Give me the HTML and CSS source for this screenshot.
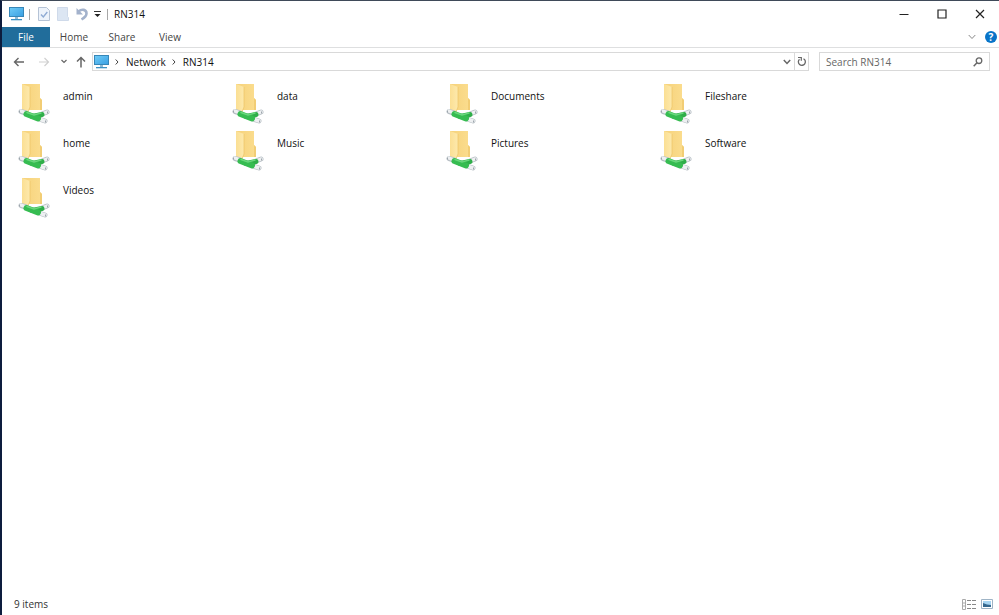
FILE: index.html
```
<!DOCTYPE html>
<html lang="en">
<head>
<meta charset="utf-8">
<title>RN314</title>
<link rel="stylesheet" href="styles.css">
</head>
<body>
<svg class="defs" width="0" height="0" aria-hidden="true">
  <defs>
    <linearGradient id="screen" x1="0" y1="0" x2="1" y2="1"><stop offset="0" stop-color="#6fccf7"/><stop offset="1" stop-color="#3a9fe2"/></linearGradient>
    <linearGradient id="flap" x1="0" y1="0" x2="1" y2="0"><stop offset="0" stop-color="#fbdf93"/><stop offset="1" stop-color="#fde9ad"/></linearGradient>
    <linearGradient id="back" x1="0" y1="0" x2="1" y2="0"><stop offset="0" stop-color="#f6d27a"/><stop offset="1" stop-color="#fbdd8f"/></linearGradient>
    <symbol id="pc" viewBox="0 0 15 14">
      <rect x="0.5" y="0.5" width="14" height="9" fill="url(#screen)" stroke="#3787b8"/>
      <path d="M6 10h3v2h-3z" fill="#8fb9d2"/><path d="M2 12h11v1.300H2z" fill="#3c91c3"/>
    </symbol>
    <symbol id="folder" viewBox="0 0 32 42">
      <path d="M4 1H22V15L24 17V27H4z" fill="url(#back)"/>
      <path d="M22 15L24 17V27H22z" fill="#f2cd75"/>
      <path d="M4 1L12 4V24L10 29L4 27z" fill="url(#flap)"/>
      <path d="M12 4V24L10 29" fill="none" stroke="#edc66b" stroke-width="0.800"/>
      <path d="M3 28.500L8 30M24 31L29 29M21 36L27 38" fill="none" stroke="#b9c0c6" stroke-width="5" stroke-linecap="round"/>
      <path d="M3 28L8 30M24 31L29 29M21 36L27 38" fill="none" stroke="#eef0f2" stroke-width="3.500" stroke-linecap="round"/>
      <path d="M14 33.500L24 31.500" stroke="#2fae49" stroke-width="5" stroke-linecap="round"/>
      <path d="M8.500 31L20 35.500" stroke="#36bc51" stroke-width="6" stroke-linecap="round"/>
      <path d="M9 29.500L16 32L23 30" fill="none" stroke="#69d77c" stroke-width="1.500" stroke-linecap="round"/>
      <path d="M1.500 27.500v2M29.500 28.500v2M27.500 37.500v2" stroke="#9da6ad"/>
    </symbol>
  </defs>
</svg>
<div class="window">
  <header class="titlebar">
    <svg class="pc" width="15" height="14"><use href="#pc"/></svg>
    <span class="rule"></span>
    <button class="quick" aria-label="Properties"><svg width="12" height="14" viewBox="0 0 12 14"><path d="M.5 .5h8l3 3v10H.5z" fill="#edf3fb" stroke="#b5c3d6"/><path d="M3 7.500l2.300 2.500L9.300 5" fill="none" stroke="#8fabd4" stroke-width="1.400"/></svg></button>
    <button class="quick" aria-label="New folder"><svg width="12" height="14" viewBox="0 0 12 14"><path d="M.5 .5h10v9l1 1v3H.5z" fill="#dce6f3" stroke="#cfdaea"/></svg></button>
    <button class="quick undo" aria-label="Undo"><svg width="12" height="14" viewBox="0 0 12 14"><path d="M2.500 4.500C6 1.500 10.500 2.500 10.500 6.500C10.500 9.500 8 11 5.500 12.500" fill="none" stroke="#a3b2cc" stroke-width="2.600"/><path d="M.5 1v6.500H7z" fill="#a3b2cc"/></svg></button>
    <button class="quick more" aria-label="Customize toolbar"><svg width="7" height="7" viewBox="0 0 7 7"><path d="M0 .5h7" stroke="#333"/><path d="M.5 3h6L3.500 6z" fill="#222"/></svg></button>
    <span class="rule"></span>
    <h1>RN314</h1>
    <div class="controls">
      <button aria-label="Minimize"><svg width="10" height="10" viewBox="0 0 10 10"><path d="M.5 5.500h9" stroke="#222"/></svg></button>
      <button aria-label="Maximize"><svg width="10" height="10" viewBox="0 0 10 10"><path d="M1 1h8v8H1z" fill="none" stroke="#222" stroke-width="1.200"/></svg></button>
      <button aria-label="Close"><svg width="10" height="10" viewBox="0 0 10 10"><path d="M1 1l8 8M9 1L1 9" stroke="#222" stroke-width="1.200"/></svg></button>
    </div>
  </header>
  <nav class="ribbon">
    <button class="tab file">File</button>
    <button class="tab">Home</button>
    <button class="tab">Share</button>
    <button class="tab">View</button>
    <button class="expand" aria-label="Expand ribbon"><svg width="8" height="6" viewBox="0 0 8 6"><path d="M.7 1L4 4.500L7.300 1" fill="none" stroke="#888"/></svg></button>
    <button class="help" aria-label="Help">?</button>
  </nav>
  <div class="location">
    <button class="nav" aria-label="Back"><svg width="12" height="12" viewBox="0 0 12 12"><path d="M11 6H1.500M5.500 2L1.500 6L5.500 10" fill="none" stroke="#666" stroke-width="1.400"/></svg></button>
    <button class="nav forward" aria-label="Forward" disabled><svg width="12" height="12" viewBox="0 0 12 12"><path d="M1 6h9.500M6.500 2L10.500 6L6.500 10" fill="none" stroke="#d0d0d0" stroke-width="1.200"/></svg></button>
    <button class="nav recent" aria-label="Recent locations"><svg width="6" height="5" viewBox="0 0 6 5"><path d="M.5 1L3 3.500L5.500 1" fill="none" stroke="#666" stroke-width="1.200"/></svg></button>
    <button class="nav up" aria-label="Up"><svg width="12" height="12" viewBox="0 0 12 12"><path d="M6 11.500V1.500M2 5.500L6 1.500L10 5.500" fill="none" stroke="#666" stroke-width="1.500"/></svg></button>
    <div class="address">
      <svg class="pc" width="15" height="14"><use href="#pc"/></svg>
      <svg class="crumb" width="4" height="6" viewBox="0 0 4 6"><path d="M.7 .5L3 3L.7 5.500" fill="none" stroke="#444"/></svg>
      <a href="#network">Network</a>
      <svg class="crumb" width="4" height="6" viewBox="0 0 4 6"><path d="M.7 .5L3 3L.7 5.500" fill="none" stroke="#444"/></svg>
      <a href="#rn314">RN314</a>
      <button class="history" aria-label="Previous locations"><svg width="8" height="6" viewBox="0 0 8 6"><path d="M.8 1L4 4.500L7.200 1" fill="none" stroke="#666" stroke-width="1.500"/></svg></button>
      <button class="refresh" aria-label="Refresh"><svg width="10" height="11" viewBox="0 0 10 11"><path d="M6.500 2.700A3.500 3.500 0 1 1 2.500 3.200" fill="none" stroke="#666" stroke-width="1.300"/><path d="M1 1.500h3.300v3.300" fill="none" stroke="#666" stroke-width="1.200"/></svg></button>
    </div>
    <label class="search">
      <input type="search" placeholder="Search RN314" aria-label="Search RN314">
      <svg width="10" height="10" viewBox="0 0 10 10"><circle cx="6" cy="3.700" r="2.800" fill="none" stroke="#666" stroke-width="1.300"/><path d="M4 5.800L.7 9.200" stroke="#666" stroke-width="1.500"/></svg>
    </label>
  </div>
  <main>
    <ul class="files">
      <li><svg width="32" height="42"><use href="#folder"/></svg><span>admin</span></li>
      <li><svg width="32" height="42"><use href="#folder"/></svg><span>data</span></li>
      <li><svg width="32" height="42"><use href="#folder"/></svg><span>Documents</span></li>
      <li><svg width="32" height="42"><use href="#folder"/></svg><span>Fileshare</span></li>
      <li><svg width="32" height="42"><use href="#folder"/></svg><span>home</span></li>
      <li><svg width="32" height="42"><use href="#folder"/></svg><span>Music</span></li>
      <li><svg width="32" height="42"><use href="#folder"/></svg><span>Pictures</span></li>
      <li><svg width="32" height="42"><use href="#folder"/></svg><span>Software</span></li>
      <li><svg width="32" height="42"><use href="#folder"/></svg><span>Videos</span></li>
    </ul>
  </main>
  <footer>
    <span>9 items</span>
    <div class="views">
      <button aria-label="Details view"><svg width="14" height="11" viewBox="0 0 14 11"><path d="M.5 .5h3v10h-3zM.5 4h3M.5 7h3" fill="none" stroke="#aaa"/><path d="M5 1.500h9M5 5.500h9M5 9.500h9" stroke="#888" stroke-dasharray="4 1"/></svg></button>
      <button aria-label="Large icons view"><svg width="12" height="10" viewBox="0 0 12 10"><path d="M.5 .5h11v9H.5z" fill="#fff" stroke="#9fb4c6"/><path d="M2 2h8v6H2z" fill="#a7d5f2"/><path d="M2 4l4 1.500L10 6v2H2z" fill="#35688f"/></svg></button>
    </div>
  </footer>
</div>
</body>
</html>
```
FILE: styles.css
```
* { box-sizing: border-box; }
body { margin: 0; font: 10px/14px "Open Sans", "Noto Sans", sans-serif; color: #111; background: #fff; }
svg { display: block; flex: none; }
button { display: flex; align-items: center; justify-content: center; margin: 0; padding: 0; border: 0; background: none; font: inherit; color: inherit; }
.defs { position: absolute; }

.window { display: flex; flex-direction: column; min-height: 100vh; border-top: 1px solid #3f4a59; border-left: 2px solid #0d1c3d; }

.titlebar { display: flex; align-items: center; height: 26px; padding-left: 7px; }
.rule { width: 1px; height: 11px; margin: 0 8px 0 5px; background: #a8a8a8; }
.quick { margin-right: 7px; }
.quick.undo { margin-right: 6px; }
.quick.more { margin-right: 1px; }
h1 { margin: 0; font: inherit; }
.titlebar .rule + h1 { margin-left: -2px; }
.controls { display: flex; margin-left: auto; }
.controls button { width: 38px; height: 26px; }

.ribbon { display: flex; height: 21px; border-bottom: 1px solid #dedfe0; color: #444; }
.tab { width: 48px; height: 20px; }
.tab.file { background: #216d9b; color: #fff; }
.expand { width: 20px; margin-left: auto; }
.help { align-self: center; width: 12px; height: 12px; margin: 0 2px 0 3px; border-radius: 50%; background: #0874c8; color: #fff; font-weight: 700; }

.location { display: flex; align-items: center; height: 27px; padding: 0 9px 0 10px; }
.nav { width: 14px; height: 20px; margin-right: 11px; }
.nav.forward { margin-right: 6px; }
.nav.recent { margin-right: 3px; }
.nav.up { margin-right: 4px; }
.address, .search { display: flex; align-items: center; height: 19px; border: 1px solid #d9d9d9; }
.address { flex: 1; margin-right: 10px; padding-left: 1px; }
.address a { color: inherit; text-decoration: none; }
.crumb { margin: 0 7px 0 6px; }
.history { width: 14px; height: 17px; margin-left: auto; }
.refresh { width: 14px; height: 17px; border-left: 1px solid #d9d9d9; }
.search { flex: 0 0 171px; padding: 0 6px; }
.search input { flex: 1; min-width: 0; padding: 0; border: 0; outline: 0; background: none; font: inherit; color: #333; }
.search input::placeholder { color: #666; opacity: 1; }

main { flex: 1; padding: 8px 16px; }
.files { display: grid; grid-template-columns: repeat(auto-fill, 214px); grid-auto-rows: 47px; margin: 0; padding: 0; list-style: none; }
.files li { display: flex; align-items: flex-start; gap: 13px; }
.files span { padding-top: 6px; }

footer { display: flex; align-items: center; justify-content: space-between; height: 22px; padding: 0 6px 0 12px; color: #333; }
.views { display: flex; gap: 5px; }
```
